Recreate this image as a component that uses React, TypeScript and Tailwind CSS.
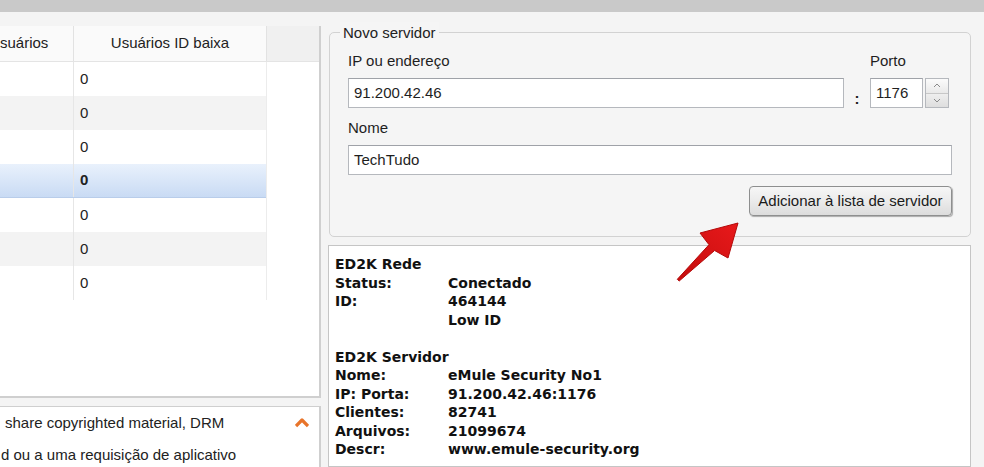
import { ReactNode } from "react";

const rows = [
  { alt: false, sel: false },
  { alt: true, sel: false },
  { alt: false, sel: false },
  { alt: false, sel: true },
  { alt: false, sel: false },
  { alt: true, sel: false },
  { alt: false, sel: false },
];

const info: [string, string][] = [
  ["Status:", "Conectado"],
  ["ID:", "464144"],
  ["", "Low ID"],
];

const server: [string, string][] = [
  ["Nome:", "eMule Security No1"],
  ["IP: Porta:", "91.200.42.46:1176"],
  ["Clientes:", "82741"],
  ["Arquivos:", "21099674"],
  ["Descr:", "www.emule-security.org"],
];

function Field({ children, className }: { children: ReactNode; className?: string }) {
  return (
    <div
      className={`flex h-[30px] items-center border border-[#b5b8bd] border-t-[#9fa2a8] bg-white px-[5px] ${className ?? ""}`}
    >
      {children}
    </div>
  );
}

function InfoRow({ label, value }: { label: string; value: string }) {
  return (
    <div className="flex">
      <span className="w-[113px]">{label}</span>
      <span>{value}</span>
    </div>
  );
}

export default function App() {
  return (
    <div className="relative h-[467px] w-[984px] overflow-hidden bg-[#f4f4f4] font-['Liberation_Sans',Arial,sans-serif] text-[15px] text-[#1e1e1e]">
      <div className="h-[12px] bg-[#c9c9c9]" />

      <div className="flex h-[455px]">
        {/* left: server list + log */}
        <div className="flex w-[321px] flex-col pt-[14px]">
          <div className="flex h-[372px] shrink-0 flex-col border-r-2 border-b-2 border-[#cfcfcf] bg-white">
            <div className="flex h-[36px] border-b border-[#e4e4e4] bg-[#fafafa] text-[#222]">
              <div className="flex w-[74px] items-center border-r border-[#e2e2e2] whitespace-nowrap">suários</div>
              <div className="flex w-[193px] items-center justify-center border-r border-[#e2e2e2]">
                Usuários ID baixa
              </div>
              <div className="flex-1 bg-[#f0f0f0]" />
            </div>
            <div className="w-[267px] border-r border-[#ececec]">
              {rows.map((r, i) => (
                <div
                  key={i}
                  className={`flex h-[34px] ${
                    r.sel
                      ? "bg-gradient-to-b from-[#e9f1fc] to-[#c9dbf4] border-b border-[#b9cdea] font-bold text-black"
                      : r.alt
                        ? "bg-[#f3f3f3]"
                        : "bg-white"
                  }`}
                >
                  <div className="w-[74px] border-r border-[#e6e6e6]" />
                  <div className="flex items-center pl-[6px] text-[#222]">0</div>
                </div>
              ))}
            </div>
          </div>

          <div className="mt-[8px] flex flex-1 flex-col border-t border-r-2 border-[#cfcfcf] bg-white text-[#222]">
            <div className="flex h-[32px] items-center justify-between pr-[10px] pl-[5px]">
              <span>share copyrighted material, DRM</span>
              <svg width="14" height="10" viewBox="0 0 14 10">
                <path d="M1 8 L7 2 L13 8" fill="none" stroke="#e8742a" strokeWidth="3.2" strokeLinejoin="round" />
              </svg>
            </div>
            <div className="flex h-[32px] items-center pl-[1px]">d ou a uma requisição de aplicativo</div>
          </div>
        </div>

        {/* right: new server + info */}
        <div className="ml-[8px] flex w-[642px] flex-col pt-[20px]">
          <div className="relative h-[205px] shrink-0 rounded-[5px] border border-[#d2d2d2] bg-[#f5f5f5] px-[18px] pt-[19px]">
            <span className="absolute -top-[11px] left-[10px] bg-[#f5f5f5] px-[3px] text-[#222]">Novo servidor</span>

            <div className="flex">
              <div className="flex w-[496px] flex-col gap-[8px]">
                <span className="leading-[18px]">IP ou endereço</span>
                <Field>91.200.42.46</Field>
              </div>
              <div className="flex w-[26px] items-end justify-center pb-[2px] leading-[15px] font-bold">:</div>
              <div className="flex flex-col gap-[8px]">
                <span className="leading-[18px]">Porto</span>
                <div className="flex items-center gap-[2px]">
                  <Field className="w-[53px]">1176</Field>
                  <div className="flex h-[30px] w-[24px] flex-col border border-[#b5b8bd] bg-[#f0f0f0]">
                    <div className="flex flex-1 items-center justify-center border-b border-[#c7c7c7] bg-gradient-to-b from-[#fbfbfb] to-[#e9e9e9]">
                      <svg width="8" height="5" viewBox="0 0 8 5">
                        <path d="M1 4 L4 1 L7 4" fill="none" stroke="#8a8a8a" strokeWidth="1" />
                      </svg>
                    </div>
                    <div className="flex flex-1 items-center justify-center bg-gradient-to-b from-[#eeeeee] to-[#dedede]">
                      <svg width="8" height="5" viewBox="0 0 8 5">
                        <path d="M1 1 L4 4 L7 1" fill="none" stroke="#8a8a8a" strokeWidth="1" />
                      </svg>
                    </div>
                  </div>
                </div>
              </div>
            </div>

            <div className="mt-[11px] flex flex-col gap-[8px]">
              <span className="leading-[18px]">Nome</span>
              <Field>TechTudo</Field>
            </div>

            <div className="mt-[11px] flex justify-end">
              <button className="h-[30px] w-[203px] rounded-[4px] border border-[#8e8f8f] bg-gradient-to-b from-[#f6f6f6] via-[#ebebeb] to-[#dcdcdc] text-[#1a1a1a] shadow-[1px_1px_1px_rgba(0,0,0,0.3)]">
                Adicionar à lista de servidor
              </button>
            </div>
          </div>

          <div className="mt-[8px] -ml-px w-[643px] flex-1 border border-[#c5c5c5] bg-white pt-[9px] pl-[6px] font-['DejaVu_Sans',Verdana,sans-serif] text-[14px] leading-[18.5px] font-bold text-[#111]">
            <div>ED2K Rede</div>
            {info.map(([l, v]) => (
              <InfoRow key={l + v} label={l} value={v} />
            ))}
            <div className="h-[18.5px]" />
            <div>ED2K Servidor</div>
            {server.map(([l, v]) => (
              <InfoRow key={l} label={l} value={v} />
            ))}
          </div>
        </div>
      </div>

      {/* red pointer arrow */}
      <svg className="absolute top-[215px] left-[670px]" width="75" height="75" viewBox="0 0 75 75">
        <defs>
          <linearGradient id="arr" x1="0" y1="1" x2="1" y2="0">
            <stop offset="0" stopColor="#c40d0d" />
            <stop offset="1" stopColor="#e8191b" />
          </linearGradient>
        </defs>
        <polygon
          points="68,8 30,18 39,29.7 7.3,64.3 9.2,66 44.6,35.5 58,43"
          fill="url(#arr)"
          stroke="#b30a0a"
          strokeWidth="1"
          strokeLinejoin="round"
        />
      </svg>
    </div>
  );
}
